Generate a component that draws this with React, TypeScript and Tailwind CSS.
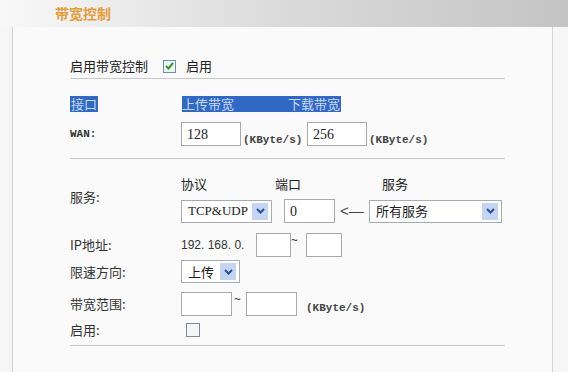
import React from "react";

const cjk = "font-['Noto_Sans_CJK_SC',sans-serif]";
const mono = "font-['Liberation_Mono',monospace]";

const Chevron = () => (
  <span className="flex h-[17px] w-[16px] items-center justify-center bg-[#c3d5f2]">
    <svg width="9" height="6" viewBox="0 0 9 6">
      <path d="M1 1 L4.5 4.5 L8 1" fill="none" stroke="#2a4e9c" strokeWidth="2" />
    </svg>
  </span>
);

const Input = ({ w, value }: { w: string; value?: string }) => (
  <div
    className={`${w} h-[24px] border border-[#a9a9a9] bg-white pl-[5px] flex items-center text-[14px] text-[#222] font-['Liberation_Serif',serif]`}
  >
    {value}
  </div>
);

const Select = ({ w, label, font }: { w: string; label: string; font: string }) => (
  <div
    className={`${w} h-[23px] border border-[#a5acb5] bg-white flex items-center justify-between pl-[6px] pr-[3px] text-[13px] text-[#222] ${font}`}
  >
    <span>{label}</span>
    <Chevron />
  </div>
);

const Label = ({ children }: { children: React.ReactNode }) => (
  <div className={`w-[111px] shrink-0 text-[13px] text-[#333] ${cjk}`}>{children}</div>
);

const Unit = () => <span className={`text-[11px] font-bold text-[#444] ${mono}`}>(KByte/s)</span>;

export default function App() {
  return (
    <div className="w-[568px] h-[372px] bg-[#f6f6f6] overflow-hidden">
      {/* header bar */}
      <div className="h-[27px] pl-[55px] flex items-center bg-gradient-to-r from-[#f8f8f8] via-[#dadada] to-[#c4c4c4]">
        <span className={`text-[14px] font-bold text-[#e59c3a] ${cjk}`}>带宽控制</span>
      </div>

      <div className="ml-[12px] w-[541px] h-[345px] border-l border-r border-[#d2d2d2] bg-[#fafafa] pl-[57px] pt-[28px]">
        {/* enable */}
        <div className={`h-[22px] flex items-center text-[13px] text-[#222] ${cjk}`}>
          <span className="w-[93px]">启用带宽控制</span>
          <span className="w-[13px] h-[13px] border border-[#6d8fb3] bg-[#eef5ee] flex items-center justify-center">
            <svg width="9" height="8" viewBox="0 0 9 8">
              <path d="M1 4 L3.5 6.5 L8 1" fill="none" stroke="#2f9a2f" strokeWidth="2" />
            </svg>
          </span>
          <span className="ml-[10px]">启用</span>
        </div>
        <div className="w-[435px] h-px bg-[#c8c8c8] mt-[1px]" />

        {/* table header */}
        <div className={`mt-[17px] h-[16px] flex items-center text-[13px] text-[#c6d8f4] ${cjk}`}>
          <span className="bg-[#3168c4] px-[1px] leading-[16px]">接口</span>
          <span className="ml-[84px] w-[159px] bg-[#3168c4] leading-[16px] flex justify-between pr-[1px]">
            <span>上传带宽</span>
            <span>下载带宽</span>
          </span>
        </div>

        {/* WAN */}
        <div className="mt-[9px] h-[26px] flex items-center">
          <div className={`w-[111px] text-[11px] font-bold text-[#333] ${mono}`}>WAN:</div>
          <Input w="w-[60px]" value="128" />
          <span className="ml-[2px] w-[64px] mt-[6px]"><Unit /></span>
          <Input w="w-[60px]" value="256" />
          <span className="ml-[2px] mt-[6px]"><Unit /></span>
        </div>
        <div className="w-[435px] h-px bg-[#c8c8c8] mt-[11px]" />

        {/* service */}
        <div className="mt-[16px] flex items-center">
          <Label>
            <span className="relative -top-[2px]">服务:</span>
          </Label>
          <div className="flex flex-col">
            <div className={`h-[18px] flex items-center text-[13px] text-[#222] ${cjk}`}>
              <span className="w-[94px]">协议</span>
              <span className="w-[107px]">端口</span>
              <span>服务</span>
            </div>
            <div className="mt-[6px] flex items-center">
              <Select w="w-[91px]" label="TCP&UDP" font="font-['Liberation_Serif',serif]" />
              <div className="ml-[12px]">
                <Input w="w-[51px]" value="0" />
              </div>
              <span className="w-[34px] text-center text-[15px] text-[#444] font-['Liberation_Sans',sans-serif]">&lt;—</span>
              <Select w="w-[133px]" label="所有服务" font={cjk} />
            </div>
          </div>
        </div>

        {/* IP */}
        <div className="mt-[10px] h-[24px] flex items-center">
          <Label>IP地址:</Label>
          <span className="w-[75px] text-[12px] text-[#333] font-['Liberation_Sans',sans-serif]">192. 168. 0.</span>
          <Input w="w-[35px]" />
          <span className="w-[15px] text-[12px] text-[#333] -mt-[8px]">~</span>
          <Input w="w-[36px]" />
        </div>

        {/* direction */}
        <div className="mt-[3px] h-[23px] flex items-center">
          <Label>限速方向:</Label>
          <Select w="w-[59px]" label="上传" font={cjk} />
        </div>

        {/* range */}
        <div className="mt-[9px] h-[23px] flex items-center">
          <Label>带宽范围:</Label>
          <Input w="w-[51px]" />
          <span className="w-[14px] pl-[2px] text-[12px] text-[#333] -mt-[8px]">~</span>
          <Input w="w-[51px]" />
          <span className="ml-[9px] mt-[2px]"><Unit /></span>
        </div>

        {/* enable rule */}
        <div className="mt-[7px] h-[15px] flex items-center">
          <Label>启用:</Label>
          <span className="ml-[5px] w-[14px] h-[14px] border border-[#7a8a9a] bg-[#f4f6f8]" />
        </div>
        <div className="w-[435px] h-px bg-[#c8c8c8] mt-[8px]" />
      </div>
    </div>
  );
}
